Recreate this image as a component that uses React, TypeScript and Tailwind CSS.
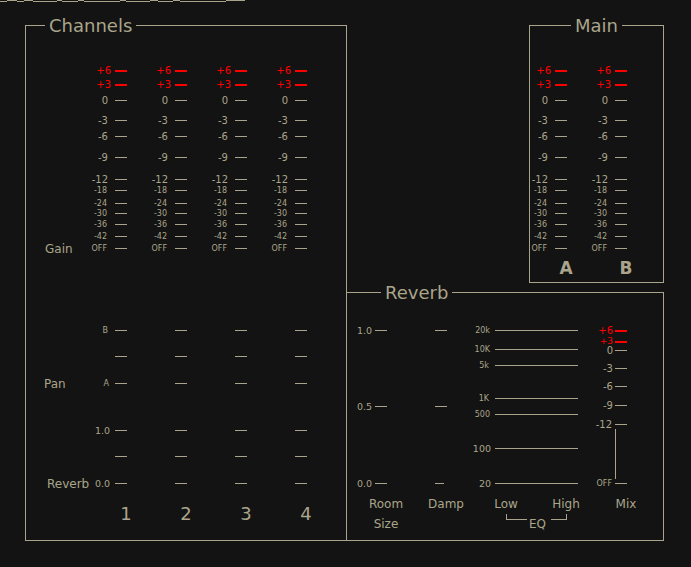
import React from 'react';

interface Mark {
  l?: string;
  mt?: string;
  t?: string;
  g?: string;
  red?: boolean;
  tick?: string;
  line?: boolean;
}

function Scale({ marks, className }: { marks: Mark[]; className: string }) {
  return (
    <div className={`flex flex-col ${className}`}>
      {marks.map((m, i) =>
        m.line ? (
          <div key={i} className="mr-[11px] h-[50px] w-px self-end bg-[#a9a48b]" />
        ) : (
          <div key={i} className={`flex h-[9px] items-center justify-end ${m.mt ?? ''}`}>
            {m.l && (
              <span
                className={`whitespace-nowrap leading-none ${m.t ?? 'text-[10px]'} ${m.g ?? 'mr-[7px]'} ${
                  m.red ? 'text-[#ff0000]' : ''
                }`}
              >
                {m.l}
              </span>
            )}
            <div
              className={`${m.tick ?? 'w-[12px]'} ${m.red ? 'h-[2px] bg-[#ff0000]' : 'h-px bg-[#a9a48b]'}`}
            />
          </div>
        )
      )}
    </div>
  );
}

const gain: Mark[] = [
  { l: '+6', g: 'mr-[4px]', red: true },
  { l: '+3', mt: 'mt-[5px]', g: 'mr-[4px]', red: true },
  { l: '0', mt: 'mt-[7px]' },
  { l: '-3', mt: 'mt-[11px]' },
  { l: '-6', mt: 'mt-[7px]' },
  { l: '-9', mt: 'mt-[12px]' },
  { l: '-12', mt: 'mt-[13px]' },
  { l: '-18', mt: 'mt-[2px]', t: 'text-[8px]', g: 'mr-[8px]' },
  { l: '-24', mt: 'mt-[4px]', t: 'text-[8px]', g: 'mr-[8px]' },
  { l: '-30', mt: 'mt-[1px]', t: 'text-[8px]', g: 'mr-[8px]' },
  { l: '-36', mt: 'mt-[2px]', t: 'text-[8px]', g: 'mr-[8px]' },
  { l: '-42', mt: 'mt-[3px]', t: 'text-[8px]', g: 'mr-[8px]' },
  { l: 'OFF', mt: 'mt-[3px]', t: 'text-[8px]', g: 'mr-[8px]' },
];

const pan1: Mark[] = [
  { l: 'B', t: 'text-[8px]', g: 'mr-[7px]' },
  { mt: 'mt-[17px]' },
  { l: 'A', mt: 'mt-[18px]', t: 'text-[8px]', g: 'mr-[6px]' },
];
const panN: Mark[] = [{}, { mt: 'mt-[17px]' }, { mt: 'mt-[18px]' }];
const rev1: Mark[] = [
  { l: '1.0', t: 'text-[9.5px]', g: 'mr-[5px]' },
  { mt: 'mt-[17px]' },
  { l: '0.0', mt: 'mt-[18px]', t: 'text-[9.5px]', g: 'mr-[5px]' },
];

const room: Mark[] = [
  { l: '1.0', t: 'text-[9.5px]', g: 'mr-[3px]' },
  { l: '0.5', mt: 'mt-[67px]', t: 'text-[9.5px]', g: 'mr-[3px]' },
  { l: '0.0', mt: 'mt-[68px]', t: 'text-[9.5px]', g: 'mr-[3px]' },
];
const damp: Mark[] = [{}, { mt: 'mt-[67px]' }, { mt: 'mt-[68px]', tick: 'w-[9px] mr-[3px]' }];
const eq: Mark[] = [
  { l: '20k', t: 'text-[8px]', g: 'mr-[5px]', tick: 'w-[83px]' },
  { l: '10K', mt: 'mt-[10px]', t: 'text-[8px]', g: 'mr-[5px]', tick: 'w-[83px]' },
  { l: '5k', mt: 'mt-[7px]', t: 'text-[8px]', g: 'mr-[6px]', tick: 'w-[83px]' },
  { l: '1K', mt: 'mt-[24px]', t: 'text-[8px]', g: 'mr-[6px]', tick: 'w-[83px]' },
  { l: '500', mt: 'mt-[7px]', t: 'text-[8px]', g: 'mr-[5px]', tick: 'w-[83px]' },
  { l: '100', mt: 'mt-[25px]', t: 'text-[9.5px]', g: 'mr-[4px]', tick: 'w-[83px]' },
  { l: '20', mt: 'mt-[26px]', t: 'text-[9.5px]', g: 'mr-[4px]', tick: 'w-[83px]' },
];
const mix: Mark[] = [
  { l: '+6', g: 'mr-[2px]', red: true },
  { l: '+3', mt: 'mt-[2px]', t: 'text-[9px]', g: 'mr-[2px]', red: true },
  { l: '0', g: 'mr-[2px]' },
  { l: '-3', mt: 'mt-[9px]', g: 'mr-[2px]' },
  { l: '-6', mt: 'mt-[9px]', g: 'mr-[2px]' },
  { l: '-9', mt: 'mt-[10px]', g: 'mr-[2px]' },
  { l: '-12', mt: 'mt-[10px]', g: 'mr-[3px]' },
  { line: true },
  { l: 'OFF', t: 'text-[8px]', g: 'mr-[3px]' },
];

const stripe: [number, number, number][] = [
  [0, 7, 1], [7, 17, 0], [17, 24, 1], [24, 33, 0], [33, 57, 1], [57, 62, 0], [62, 78, 1],
  [78, 84, 0], [84, 120, 1], [120, 126, 0], [126, 150, 1], [150, 158, 0], [158, 173, 1],
  [173, 180, 0], [180, 226, 1], [226, 245, 0],
];

export default function App() {
  return (
    <div className="flex h-[567px] w-[691px] flex-col overflow-hidden bg-[#131313] font-['DejaVu_Sans',sans-serif] text-[#aaa58b]">
      <svg width="245" height="2" className="block shrink-0">
        {stripe.map(([a, b, y], i) => (
          <rect key={i} x={a} y={y} width={b - a} height={1} fill="#a9a48b" />
        ))}
      </svg>
      <div className="mt-[13px] flex items-start pl-[25px]">
        {/* Channels */}
        <fieldset className="m-0 h-[526px] w-[322px] min-w-0 border border-[#a9a48b] p-0">
          <legend className="ml-[19px] px-[4px] text-[18px] leading-[21px]">Channels</legend>
          <div className="flex flex-col pt-[30px]">
            <div className="flex">
              <div className="flex w-[41px] flex-col justify-end">
                <div className="flex h-[9px] items-center whitespace-nowrap pl-[19px] text-[12px] leading-none">Gain</div>
              </div>
              {[0, 1, 2, 3].map((c) => (
                <Scale key={c} marks={gain} className="w-[60px]" />
              ))}
            </div>
            <div className="mt-[73px] flex">
              <div className="flex w-[41px] flex-col justify-end">
                <div className="flex h-[9px] items-center whitespace-nowrap pl-[18px] text-[12px] leading-none">Pan</div>
              </div>
              {[0, 1, 2, 3].map((c) => (
                <Scale key={c} marks={c === 0 ? pan1 : panN} className="w-[60px]" />
              ))}
            </div>
            <div className="mt-[38px] flex">
              <div className="flex w-[41px] flex-col justify-end">
                <div className="flex h-[9px] items-center whitespace-nowrap pl-[21px] text-[12px] leading-none">Reverb</div>
              </div>
              {[0, 1, 2, 3].map((c) => (
                <Scale key={c} marks={c === 0 ? rev1 : panN} className="w-[60px]" />
              ))}
            </div>
            <div className="ml-[70px] mt-[16px] flex text-[18px] leading-[20px]">
              {['1', '2', '3', '4'].map((n) => (
                <div key={n} className="w-[60px] text-center">
                  {n}
                </div>
              ))}
            </div>
          </div>
        </fieldset>

        <div className="-ml-px flex w-[318px] flex-col">
          {/* Main */}
          <fieldset className="m-0 h-[268px] w-[135px] min-w-0 self-end border border-[#a9a48b] p-0">
            <legend className="ml-[41px] px-[4px] text-[18px] leading-[21px]">Main</legend>
            <div className="flex flex-col pt-[30px]">
              <div className="flex">
                <Scale marks={gain} className="w-[37px]" />
                <Scale marks={gain} className="w-[60px]" />
              </div>
              <div className="ml-[6px] mt-[5px] flex text-[17px] font-bold leading-[20px]">
                <div className="w-[60px] text-center">A</div>
                <div className="w-[60px] text-center">B</div>
              </div>
            </div>
          </fieldset>

          {/* Reverb */}
          <fieldset className="m-0 -mt-px h-[259px] w-[318px] min-w-0 border border-[#a9a48b] p-0">
            <legend className="ml-[34px] px-[4px] text-[18px] leading-[21px]">Reverb</legend>
            <div className="flex flex-col pt-[23px]">
              <div className="flex">
                <Scale marks={room} className="w-[40px]" />
                <Scale marks={damp} className="w-[60px]" />
                <Scale marks={eq} className="w-[131px]" />
                <Scale marks={mix} className="w-[49px]" />
              </div>
              <div className="ml-[9px] mt-[6px] flex text-[12px] leading-[20px]">
                {['Room', 'Damp', 'Low', 'High', 'Mix'].map((s) => (
                  <div key={s} className="w-[60px] text-center">
                    {s}
                  </div>
                ))}
              </div>
              <div className="ml-[9px] flex items-start text-[12px] leading-[20px]">
                <div className="w-[60px] text-center">Size</div>
                <div className="ml-[90px] h-[6px] w-[21px] border-b border-l border-[#a9a48b]" />
                <div className="ml-[2px]">EQ</div>
                <div className="ml-[5px] h-[6px] w-[16px] border-b border-r border-[#a9a48b]" />
              </div>
            </div>
          </fieldset>
        </div>
      </div>
    </div>
  );
}
